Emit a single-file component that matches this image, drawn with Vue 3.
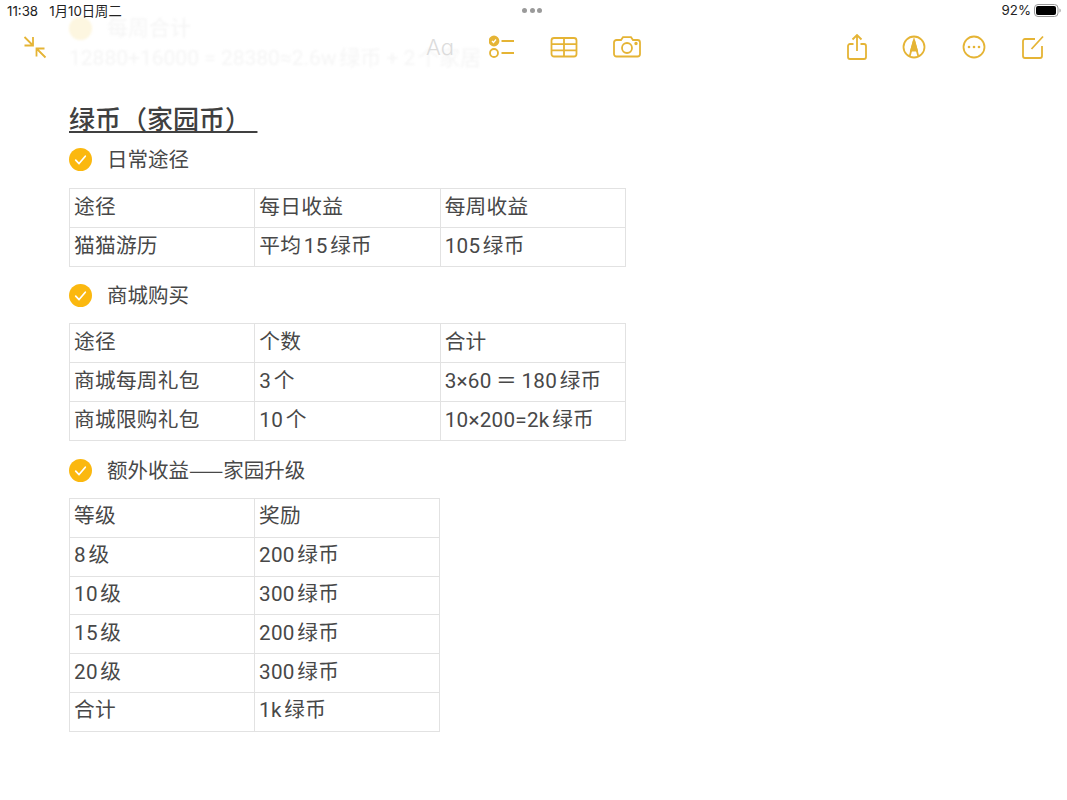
<script setup>
const sections = [
  { label: '日常途径', cols: 3, rows: [['途径','每日收益','每周收益'],['猫猫游历','平均15绿币','105绿币']] },
  { label: '商城购买', cols: 3, rows: [['途径','个数','合计'],['商城每周礼包','3个','3×60\u2009＝\u2009180绿币'],['商城限购礼包','10个','10×200=2k绿币']] },
  { label: '额外收益——家园升级', cols: 2, rows: [['等级','奖励'],['8级','200绿币'],['10级','300绿币'],['15级','200绿币'],['20级','300绿币'],['合计','1k绿币']] },
]
</script>

<template>
  <div class="page">
    <main class="note">
      <div class="ghost">
        <div class="ghost-item"><span class="ghost-dot"></span>每周合计</div>
        <div class="ghost-line">12880+16000 = 28380≈2.6w绿币 + 2个家居</div>
      </div>
      <h1 class="title">绿币（家园币）&nbsp;</h1>
      <section v-for="s in sections" :key="s.label" class="section">
        <div class="check">
          <svg class="tick" viewBox="0 0 24 24" width="23" height="23">
            <circle cx="12" cy="12" r="12" fill="#fbb80f" />
            <path d="M7 12.600l3.500 3.600L17 8.600" fill="none" stroke="#fff" stroke-width="1.800" stroke-linecap="round" stroke-linejoin="round" />
          </svg>
          <span>{{ s.label }}</span>
        </div>
        <table class="table" :class="s.cols === 2 ? 'two' : 'three'">
          <tr v-for="(r, i) in s.rows" :key="i">
            <td v-for="(c, j) in r" :key="j">{{ c }}</td>
          </tr>
        </table>
      </section>
    </main>

    <header class="top">
      <div class="status">
        <span class="time">11:38&nbsp;&nbsp;&nbsp;1月10日周二</span>
        <span class="dots"><i></i><i></i><i></i></span>
        <span class="batt">92%
          <svg width="28" height="13" viewBox="0 0 28 13">
            <rect x="0.5" y="0.5" width="23.500" height="12" rx="3.500" fill="none" stroke="#999" />
            <rect x="2" y="2" width="20" height="9" rx="2" fill="#000" />
            <path d="M25.500 4.500v4c.8-.3 1.200-1 1.200-2s-.4-1.700-1.200-2z" fill="#999" />
          </svg>
        </span>
      </div>
      <nav class="tools">
        <svg class="ic collapse" width="24" height="24" viewBox="0 0 24 24">
          <path d="M1.500 2L10 10.500M1.500 10.500H10V2M22.500 22.500L13.500 13.500M21.500 13.500h-8v8" />
        </svg>
        <div class="mid">
          <span class="aa">Aa</span>
          <svg class="ic" width="26" height="24" viewBox="0 0 26 24">
            <circle cx="5" cy="6" r="4.500" fill="#e5b435" />
            <path d="M3 6l1.500 1.500L7 4.500" stroke="#fff" stroke-width="1.300" />
            <circle cx="5" cy="18" r="4" />
            <path d="M12.500 6H25M12.500 18H25" />
          </svg>
          <svg class="ic" width="28" height="22" viewBox="0 0 28 22">
            <rect x="1.500" y="2" width="25" height="18.500" rx="2.500" />
            <path d="M1.500 8.200h25M1.500 14.400h25M14 2v18.500" />
          </svg>
          <svg class="ic" width="28" height="22" viewBox="0 0 28 22">
            <path d="M3.500 4H8l2-2.800h8L20 4h4.500A2.500 2.500 0 0 1 27 6.500V18a2.500 2.500 0 0 1-2.500 2.500h-21A2.500 2.500 0 0 1 1 18V6.500A2.500 2.500 0 0 1 3.500 4z" />
            <circle cx="14" cy="12" r="5" />
            <circle cx="23" cy="7.500" r=".8" fill="#e5b435" />
          </svg>
        </div>
        <div class="right">
          <svg class="ic" width="20" height="26" viewBox="0 0 20 26">
            <path d="M6.500 10H3a2 2 0 0 0-2 2v11a2 2 0 0 0 2 2h14a2 2 0 0 0 2-2V12a2 2 0 0 0-2-2h-3.500M10 17V1.500M5.500 5.500L10 1l4.500 4.500" />
          </svg>
          <svg class="ic" width="24" height="24" viewBox="0 0 24 24">
            <circle cx="12" cy="12" r="10.500" />
            <path d="M12 5l-4.500 17M12 5l4.500 17" />
            <path d="M12 5l3 10.500H9z" fill="#e5b435" />
          </svg>
          <svg class="ic" width="24" height="24" viewBox="0 0 24 24">
            <circle cx="12" cy="12" r="10.500" />
            <circle cx="7" cy="12" r="1.300" fill="#e5b435" stroke="none" />
            <circle cx="12" cy="12" r="1.300" fill="#e5b435" stroke="none" />
            <circle cx="17" cy="12" r="1.300" fill="#e5b435" stroke="none" />
          </svg>
          <svg class="ic" width="24" height="24" viewBox="0 0 24 24">
            <path d="M14 4H4a2 2 0 0 0-2 2v15a2 2 0 0 0 2 2h15a2 2 0 0 0 2-2V11M10.500 14L22 1.500" />
          </svg>
        </div>
      </nav>
    </header>
  </div>
</template>

<style scoped>
.page {
  position: relative;
  width: 1067px;
  height: 800px;
  overflow: hidden;
  background: #fff;
  font-family: Roboto, "Noto Sans CJK SC", sans-serif;
  color: #484848;
  text-autospace: normal;
}
.note {
  padding: 13px 0 0 69px;
}
.ghost {
  color: #f5f5f5;
  font-size: 21px;
  line-height: 30px;
  height: 90px;
  filter: blur(1.200px);
}
.ghost-item {
  display: flex;
  align-items: center;
  gap: 15px;
}
.ghost-dot {
  width: 23px;
  height: 23px;
  border-radius: 50%;
  background: #fdf6e0;
}
.title {
  margin: 0;
  font-size: 26px;
  font-weight: 500;
  line-height: 34px;
  text-decoration: underline;
  text-underline-offset: 2px;
  text-decoration-thickness: 2px;
  color: #404040;
  white-space: pre;
}
.section {
  display: flex;
  flex-direction: column;
}
.check {
  display: flex;
  align-items: center;
  gap: 15px;
  font-family: "Noto Sans CJK SC", sans-serif;
  font-size: 20.500px;
  height: 36px;
  margin-top: 4px;
  margin-bottom: 11px;
}
.check span {
  position: relative;
  top: -1px;
}
.section + .section .check {
  margin-top: 10px;
  margin-bottom: 10px;
}
.section:last-child .check {
  margin-top: 11px;
  margin-bottom: 10px;
}
.tick { flex: none; }
.table {
  border-collapse: collapse;
  table-layout: fixed;
  font-size: 20.700px;
  letter-spacing: 0.25px;
}
.three { width: 557px; }
.two { width: 371px; }
.table td {
  border: 1px solid #e2e2e2;
  height: 39px;
  padding: 0 4px 7px;
  box-sizing: border-box;
  white-space: nowrap;
}
.two td { height: 38.800px; }
.top {
  position: absolute;
  inset: 0 0 auto 0;
}
.status {
  display: flex;
  align-items: center;
  justify-content: space-between;
  height: 20px;
  padding: 0 5px 0 7px;
  font-family: Inter, "Noto Sans CJK SC", sans-serif;
  font-size: 13.300px;
  color: #222;
  position: relative;
  text-autospace: no-autospace;
}
.dots {
  position: absolute;
  left: 522px;
  top: 8px;
  display: flex;
  gap: 2.500px;
}
.dots i {
  width: 5px;
  height: 5px;
  border-radius: 50%;
  background: #9a9a9a;
}
.batt {
  display: flex;
  align-items: center;
  gap: 3px;
}
.tools {
  display: flex;
  align-items: center;
  height: 34px;
  margin-top: 10px;
  padding: 0 22px 0 23px;
}
.ic {
  fill: none;
  stroke: #e5b435;
  stroke-width: 1.800;
  flex: none;
}
.mid {
  display: flex;
  align-items: center;
  margin-left: 379px;
}
.aa {
  color: #dcdcdc;
  font-family: Inter, sans-serif;
  font-size: 22px;
  font-weight: 300;
  font-feature-settings: "cv11";
  width: 63px;
}
.mid .ic + .ic { margin-left: 35px; }
.right {
  display: flex;
  align-items: center;
  gap: 35.500px;
  margin-left: auto;
}
</style>
